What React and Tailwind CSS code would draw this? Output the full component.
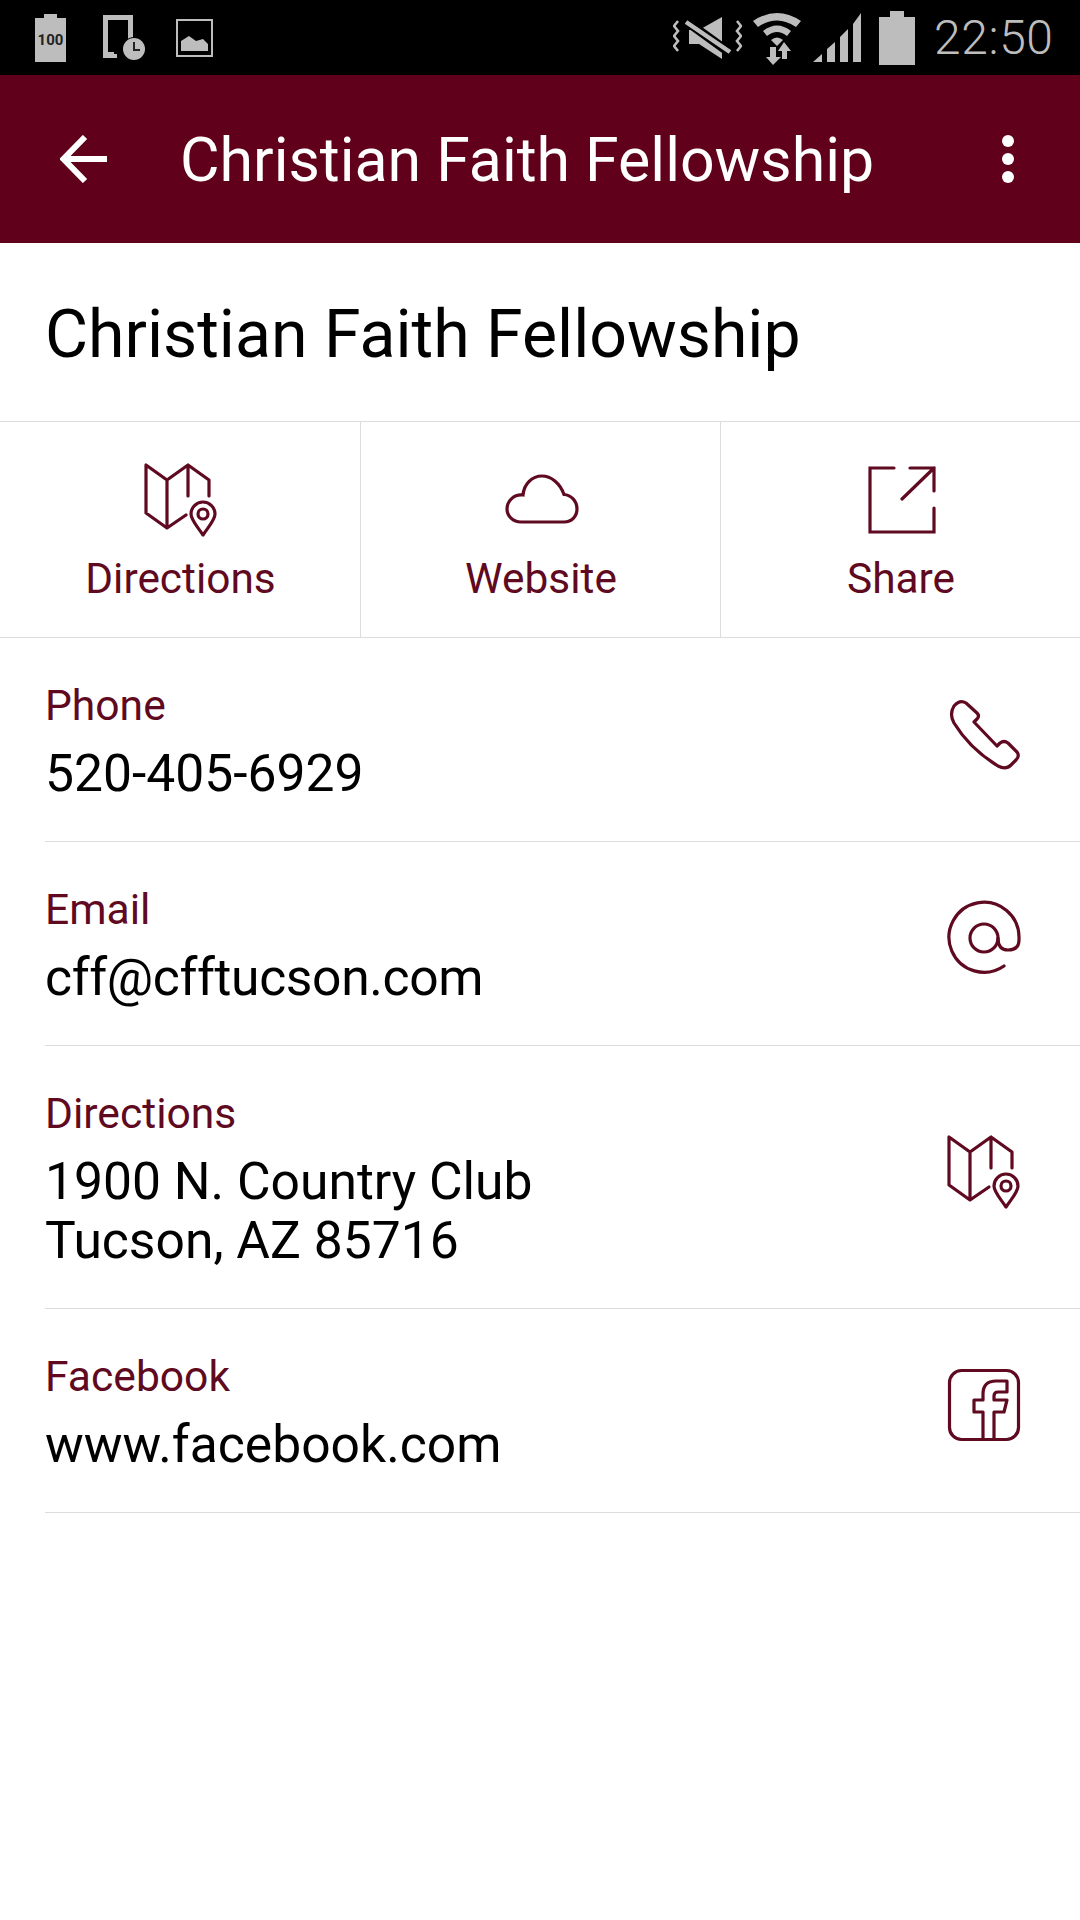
const Map = ({ className }) => (
  <svg viewBox="0 0 72 72" className={`overflow-visible ${className}`} fill="none" stroke="#5f0a20" strokeWidth="3.2" strokeLinejoin="round" strokeLinecap="round">
    <path d="M43 32V1L64 16V32M43 1L22 16L1 1V49L22 64L41 51M22 16V64" />
    <path d="M58 71C52 62 46 56 46 50A12 12 0 0 1 70 50C70 56 64 62 58 71Z" />
    <circle cx="58" cy="50" r="5" />
  </svg>
);
const Cloud = () => (
  <svg viewBox="0 0 72 48" className="w-[72px] h-[48px] overflow-visible ml-[2px] mb-[2px]" fill="none" stroke="#5f0a20" strokeWidth="3.2">
    <path d="M15 47H58C66 47 71 41 71 34C71 26 65 20 58 19.5C54 8 45 1 36 1C26 1 18 9 17 20C8 19 1 26 1 34C1 41 7 47 15 47Z" />
  </svg>
);
const Share = () => (
  <svg viewBox="0 0 66 68" className="w-[66px] h-[68px] overflow-visible ml-[2px]" fill="none" stroke="#5f0a20" strokeWidth="3.2" strokeLinecap="round">
    <path d="M25 2H1V66H65V42M41 2H65V25M65 2L33 33" />
  </svg>
);
const Phone = () => (
  <svg viewBox="0 0 72 72" className="w-[72px] h-[72px] mb-[3px] overflow-visible" fill="none" stroke="#5f0a20" strokeWidth="3.2" strokeLinejoin="round">
    <path d="M6 9Q12 2 18 6L29 16Q32 19 29 22L26 25L49 49L52 46Q56 43 60 46L69 55Q72 59 68 63L63 68Q58 73 50 69Q22 52 6 26Q1 17 6 9Z" />
  </svg>
);
const At = () => (
  <svg viewBox="0 0 72 72" className="w-[72px] h-[72px] overflow-visible" fill="none" stroke="#5f0a20" strokeWidth="3.2" strokeLinecap="round">
    <path d="M56 64A35 35 0 1 1 71 36V38Q71 48 60 48Q50 48 50 36" />
    <circle cx="36" cy="36" r="14" />
  </svg>
);
const Fb = () => (
  <svg viewBox="0 0 72 72" className="w-[72px] h-[72px] overflow-visible" fill="none" stroke="#5f0a20" strokeWidth="3.2" strokeLinejoin="round">
    <rect x="1.5" y="1.5" width="69" height="69" rx="12" />
    <path d="M35 70V43H26V31H35V25Q35 12 48 12H59V23H50Q46 23 46 27V31H59L56 43H46V70" />
  </svg>
);

const Action = ({ icon, label, border }) => (
  <div className={`flex flex-col items-center pl-[1px] ${border ? "border-r border-[#dcdcdc]" : ""}`}>
    <div className="h-[76px] mt-[40px] flex items-center justify-center">{icon}</div>
    <div className="text-[42.4px] leading-[48px] mt-[17px] text-[#5f0a20]">{label}</div>
  </div>
);

const Row = ({ label, lines, icon, h, tight }) => (
  <div className={`ml-[45px] pr-[60px] border-b border-[#dcdcdc] flex items-center justify-between ${h}`}>
    <div className="self-start pt-[43px]">
      <div className="text-[42.6px] leading-[48px] text-[#5f0a20]">{label}</div>
      <div className={`text-[51.6px] leading-[59px] mt-[15px] text-black ${tight ? "tracking-[-0.36px]" : ""}`}>
        {lines.map((l) => (
          <div key={l}>{l}</div>
        ))}
      </div>
    </div>
    <div className="mb-[11px]">{icon}</div>
  </div>
);

export default function App() {
  return (
    <div className="w-[1080px] h-[1920px] bg-white overflow-hidden font-['Roboto',sans-serif]">
      <div className="h-[75px] bg-black flex items-center text-[#bdbdbd]">
        <svg viewBox="0 0 32 48" className="w-[32px] h-[48px] ml-[35px]">
          <path d="M9 0H22V4H31V48H0V4H9Z" fill="#bdbdbd" />
          <text x="15.5" y="31" textAnchor="middle" fontSize="15" fontWeight="700" fill="#222" fontFamily="Roboto">100</text>
        </svg>
        <svg viewBox="0 0 44 46" className="w-[44px] h-[46px] ml-[36px]">
          <path d="M0 0H30V30H25V5H5V37H14V43H0Z" fill="#bdbdbd" />
          <rect x="11" y="35" width="5" height="4" fill="#000" />
          <circle cx="31" cy="34" r="12" fill="#000" />
          <circle cx="31" cy="34" r="11" fill="#bdbdbd" />
          <path d="M31 27V35H37" stroke="#222" strokeWidth="2" fill="none" />
        </svg>
        <svg viewBox="0 0 37 38" className="w-[37px] h-[38px] ml-[29px]">
          <rect x="1" y="1" width="35" height="36" fill="none" stroke="#bdbdbd" strokeWidth="2" />
          <path d="M5 32V22L13 17L20 22L27 20L32 25V32Z" fill="#bdbdbd" />
        </svg>
        <svg viewBox="0 0 69 44" className="w-[69px] h-[44px] ml-[460px]">
          <path d="M5 5L1 10L5 15L1 20L5 25L1 30L5 35M64 5L68 10L64 15L68 20L64 25L68 30L64 35" fill="none" stroke="#bdbdbd" strokeWidth="2.6" />
          <path d="M16 14H26L49 1V43L26 28H16Z" fill="#bdbdbd" />
          <path d="M13 5L57 37" stroke="#000" strokeWidth="9" />
          <path d="M13 6L57 36" stroke="#bdbdbd" strokeWidth="4.5" />
        </svg>
        <svg viewBox="0 0 50 54" className="w-[50px] h-[54px] ml-[10px]">
          <path d="M1 10Q25 -6 49 10L44 16Q25 3 6 16Z" fill="#bdbdbd" />
          <path d="M11 20Q25 9 39 20L35 25Q25 17 15 25Z" fill="#bdbdbd" />
          <path d="M19 29Q25 24 31 29L25 35Z" fill="#bdbdbd" />
          <path d="M18 36H24V46H29L21 54L14 46H18Z" fill="#bdbdbd" />
          <path d="M30 48H35V40H39L32 31L26 40H30Z" fill="#bdbdbd" />
        </svg>
        <svg viewBox="0 0 48 49" className="w-[48px] h-[49px] ml-[11px]">
          <path d="M0 49L9 41V49ZM14 36L22 29V49H14ZM27 24L35 16V49H27ZM40 11L48 0V49H40Z" fill="#bdbdbd" />
        </svg>
        <svg viewBox="0 0 36 54" className="w-[36px] h-[54px] ml-[18px]">
          <path d="M11 0H25V6H36V54H0V6H11Z" fill="#bdbdbd" />
        </svg>
        <div className="text-[48px] font-light ml-[19px] leading-none tracking-[0.6px]">22:50</div>
      </div>

      <div className="h-[168px] bg-[#61001a] flex items-center text-white">
        <svg viewBox="0 0 48 48" className="w-[48px] h-[48px] ml-[60px]" fill="none" stroke="#fff" strokeWidth="6">
          <path d="M47 24H4M25 2L3.5 24L25 46" />
        </svg>
        <div className="text-[60.8px] leading-none ml-[72px] flex-1 pt-[4px]">Christian Faith Fellowship</div>
        <div className="flex flex-col gap-[6px] mr-[66px]">
          <div className="w-[12px] h-[12px] rounded-full bg-white" />
          <div className="w-[12px] h-[12px] rounded-full bg-white" />
          <div className="w-[12px] h-[12px] rounded-full bg-white" />
        </div>
      </div>

      <div className="h-[179px] border-b border-[#dcdcdc] flex items-center pl-[45px] text-black text-[66.2px]">
        <span className="pt-[5px]">Christian Faith Fellowship</span>
      </div>

      <div className="h-[216px] border-b border-[#dcdcdc] grid grid-cols-[361px_360px_359px]">
        <Action icon={<Map className="w-[72px] h-[72px]" />} label="Directions" border />
        <Action icon={<Cloud />} label="Website" border />
        <Action icon={<Share />} label="Share" />
      </div>

      <Row label="Phone" lines={["520-405-6929"]} icon={<Phone />} h="h-[204px]" />
      <Row label="Email" lines={["cff@cfftucson.com"]} icon={<At />} h="h-[204px]" tight />
      <Row label="Directions" lines={["1900 N. Country Club", "Tucson, AZ 85716"]} icon={<Map className="w-[72px] h-[72px]" />} h="h-[263px]" />
      <Row label="Facebook" lines={["www.facebook.com"]} icon={<Fb />} h="h-[204px]" />
    </div>
  );
}
